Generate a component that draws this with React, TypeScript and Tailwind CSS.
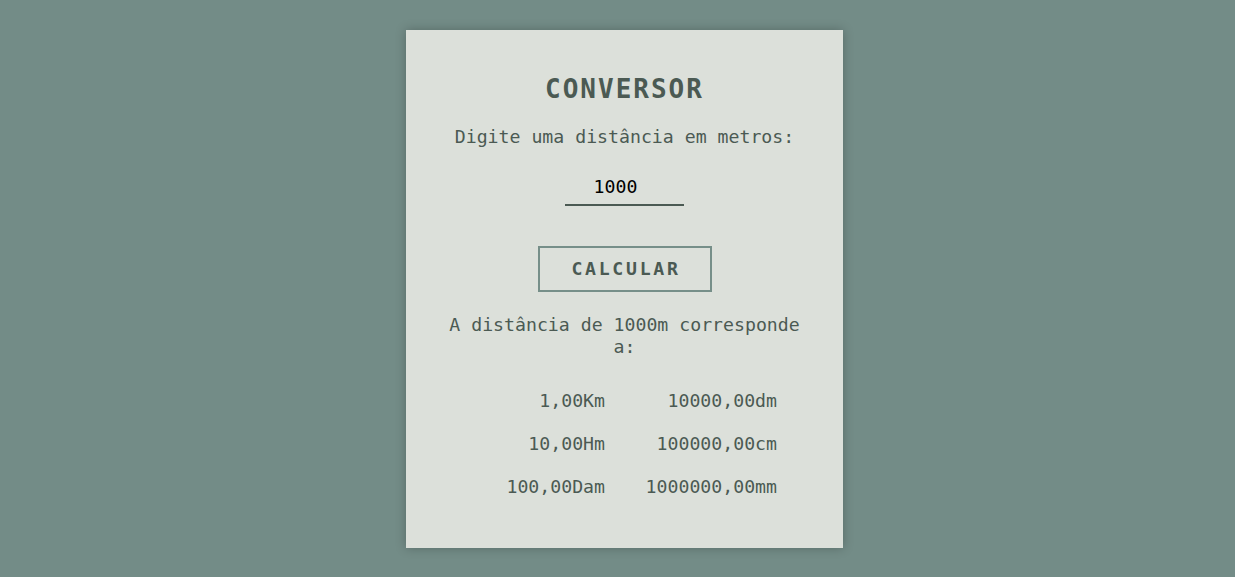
import React, { useState } from "react";

const units = [
  ["1,00Km", "10000,00dm"],
  ["10,00Hm", "100000,00cm"],
  ["100,00Dam", "1000000,00mm"],
];

const App = () => {
  const [value, setValue] = useState("1000");

  return (
    <div
      className="min-h-screen w-full bg-[#738c87] flex justify-center pt-[30px] pl-[14px]"
      style={{ fontFamily: '"DejaVu Sans Mono", "Liberation Mono", monospace' }}
    >
      <div className="w-[437px] h-[518px] bg-[#dce0da] shadow-[0_0_10px_rgba(0,0,0,0.25)] flex flex-col items-center pt-[43px] px-[40px] text-[#4b5a53]">
        <h1 className="text-[26px] leading-[32px] font-bold tracking-[2px]">CONVERSOR</h1>

        <p className="mt-[21px] text-[18.2px] leading-[22px]">Digite uma distância em metros:</p>

        <input
          value={value}
          onChange={(e) => setValue(e.target.value)}
          className="mt-[21px] w-[119px] h-[37px] pr-[18px] bg-transparent border-b-2 border-[#4b5a53] text-center text-[18.2px] text-black outline-none"
        />

        <button className="mt-[40px] w-[174px] h-[46px] border-2 border-[#768f89] text-[18.2px] font-bold tracking-[2.7px] pl-[3px]">
          CALCULAR
        </button>

        <p className="mt-[22px] text-[18.2px] leading-[22px] text-center">
          A distância de {value}m corresponde a:
        </p>

        <div className="mt-[32px] grid grid-cols-[133px_172px] justify-center gap-y-[21px] text-right text-[18.2px] leading-[22px] w-full">
          {units.map(([a, b]) => (
            <React.Fragment key={a}>
              <span>{a}</span>
              <span>{b}</span>
            </React.Fragment>
          ))}
        </div>
      </div>
    </div>
  );
};

export default App;
